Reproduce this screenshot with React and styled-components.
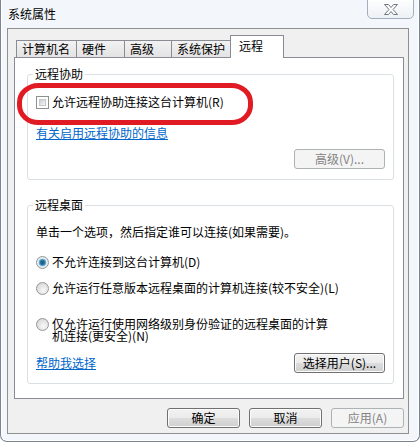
import React from 'react'
import styled, { createGlobalStyle, css } from 'styled-components'

const GlobalStyle = createGlobalStyle`
  html, body {
    margin: 0;
    padding: 0;
    background: #fff;
  }
  body {
    font-family: "Noto Sans CJK SC", "Liberation Sans", sans-serif;
    font-size: 12px;
    color: #000;
  }
`

const Window = styled.div`
  position: relative;
  width: 420px;
  height: 442px;
  box-sizing: border-box;
  background: #f3f7fb;
  border: 1px solid #7b8591;
  border-top: none;
  border-radius: 0 0 7px 7px;
  box-shadow: inset 1px 0 0 #fff, inset -1px 0 0 #fff, inset 0 -1px 0 #fff;
  display: flex;
  flex-direction: column;
`

const TitleBar = styled.div`
  height: 28px;
  flex: none;
  display: flex;
  align-items: flex-start;
  justify-content: space-between;
  padding-left: 7px;
`

const Title = styled.span`
  line-height: 28px;
  font-size: 12px;
`

const CloseButton = styled.div`
  width: 47px;
  height: 20px;
  box-sizing: border-box;
  margin-top: -1px;
  margin-right: 5px;
  border: 1px solid #a3afbc;
  border-radius: 0 0 5px 5px;
  background: linear-gradient(#fdfefe, #edf1f5);
  display: flex;
  align-items: center;
  justify-content: center;
`

const Client = styled.div`
  flex: 1;
  margin: 0 10px 7px 6px;
  border: 1px solid #8e8f8f;
  background: #f0f0f0;
  display: flex;
  flex-direction: column;
  padding: 6px 4px 5px 6px;
  min-height: 0;
`

const TabStrip = styled.div`
  height: 22px;
  flex: none;
  display: flex;
  align-items: flex-end;
  padding-left: 2px;
  position: relative;
  z-index: 1;
`

const Tab = styled.div`
  box-sizing: border-box;
  width: ${p => p.$w}px;
  height: 17px;
  margin-right: -1px;
  padding-left: 5px;
  line-height: 16px;
  border: 1px solid #898c95;
  border-bottom: none;
  background: linear-gradient(#f2f2f2, #e3e3e3);
  white-space: nowrap;
  ${p =>
    p.$active &&
    css`
      height: 23px;
      margin-bottom: -1px;
      margin-right: 0;
      padding-left: 8px;
      line-height: 20px;
      background: #fff;
    `}
`

const Panel = styled.div`
  flex: 1;
  border: 1px solid #898c95;
  background: #fff;
  padding: 8px 9px 14px 12px;
  display: flex;
  flex-direction: column;
  gap: 17px;
`

const Group = styled.fieldset`
  margin: 0;
  min-width: 0;
  padding: 0 8px 10px 8px;
  border: 1px solid #d9dfe3;
  border-radius: 3px;
  display: flex;
  flex-direction: column;
`

const Legend = styled.legend`
  padding: 0 2px;
  margin-left: -3px;
  line-height: 16px;
  font-size: 12px;
`

const Row = styled.div`
  display: flex;
  align-items: ${p => (p.$top ? 'flex-start' : 'center')};
  justify-content: ${p => (p.$spread ? 'space-between' : 'flex-start')};
  margin-top: ${p => p.$mt || 0}px;
  line-height: ${p => p.$lh || 16}px;
  min-height: 16px;
`

const Text = styled.span`
  margin-left: ${p => (p.$indent ? 3 : 0)}px;
  max-width: ${p => (p.$wrap ? '278px' : 'none')};
  white-space: ${p => (p.$wrap ? 'normal' : 'nowrap')};
`

const Link = styled.a`
  color: #0066cc;
  text-decoration: underline;
  cursor: pointer;
  line-height: 16px;
`

const CheckBox = styled.span`
  flex: none;
  width: 13px;
  height: 13px;
  box-sizing: border-box;
  border: 1px solid #8e8f8f;
  background: #fff;
  position: relative;
  &::after {
    content: '';
    position: absolute;
    inset: 2px;
    background: linear-gradient(135deg, #cbcfd5, #f6f6f6);
    border: 1px solid #c4c7cc;
    box-sizing: border-box;
  }
`

const Radio = styled.span`
  flex: none;
  width: 13px;
  height: 13px;
  box-sizing: border-box;
  border-radius: 50%;
  border: 1px solid #939699;
  margin-top: ${p => p.$mt || 0}px;
  background: radial-gradient(circle at 60% 65%, #f8f8f8 0%, #dcdcdc 70%, #c8c8c8 100%);
  ${p =>
    p.$checked &&
    css`
      background: radial-gradient(circle at 50% 50%, #1c4f74 0%, #2f7aa8 30%, #7fc7ea 48%, #e2e8ec 52%, #eef0f2 100%);
    `}
`

const Button = styled.button`
  box-sizing: border-box;
  width: ${p => p.$w || 73}px;
  height: 20px;
  padding: 0;
  font-family: inherit;
  font-size: 12px;
  line-height: 16px;
  color: #000;
  border: 1px solid #707070;
  border-radius: 3px;
  background: linear-gradient(#f2f2f2 0%, #ebebeb 50%, #dddddd 50%, #cfcfcf 100%);
  box-shadow: inset 0 0 0 1px #fcfcfc;
  &:disabled {
    color: #838383;
    border-color: #adb2b5;
    background: #f4f4f4;
    box-shadow: none;
  }
`

const Footer = styled.div`
  flex: none;
  margin-top: 9px;
  display: flex;
  justify-content: flex-end;
  gap: 9px;
`

const Annotation = styled.svg`
  position: absolute;
  left: 16px;
  top: 83px;
  overflow: visible;
  pointer-events: none;
`

const CloseGlyph = () => (
  <svg width="14" height="11" viewBox="0 0 14 11">
    <polygon
      points="0.5,0.5 4.5,0.5 7,3.5 9.5,0.5 13.5,0.5 9,5.5 13.5,10.5 9.5,10.5 7,7.5 4.5,10.5 0.5,10.5 5,5.5"
      fill="#fff"
      stroke="#6f7782"
      strokeWidth="1"
      strokeLinejoin="round"
    />
  </svg>
)

const tabs = [
  { label: '计算机名', w: 61 },
  { label: '硬件', w: 49 },
  { label: '高级', w: 48 },
  { label: '系统保护', w: 60 },
  { label: '远程', w: 54, active: true },
]

export default function App() {
  return (
    <>
      <GlobalStyle />
      <Window>
        <TitleBar>
          <Title>系统属性</Title>
          <CloseButton>
            <CloseGlyph />
          </CloseButton>
        </TitleBar>
        <Client>
          <TabStrip>
            {tabs.map(t => (
              <Tab key={t.label} $w={t.w} $active={t.active}>
                {t.label}
              </Tab>
            ))}
          </TabStrip>
          <Panel>
            <Group>
              <Legend>远程协助</Legend>
              <Row $mt={12}>
                <CheckBox />
                <Text $indent>允许远程协助连接这台计算机(R)</Text>
              </Row>
              <Row $mt={15}>
                <Link>有关启用远程协助的信息</Link>
              </Row>
              <Row $mt={8} $spread>
                <span />
                <Button $w={91} disabled>
                  高级(V)...
                </Button>
              </Row>
            </Group>
            <Group>
              <Legend>远程桌面</Legend>
              <Row $mt={11}>
                <Text>单击一个选项，然后指定谁可以连接(如果需要)。</Text>
              </Row>
              <Row $mt={14}>
                <Radio $checked />
                <Text $indent>不允许连接到这台计算机(D)</Text>
              </Row>
              <Row $mt={10}>
                <Radio />
                <Text $indent>允许运行任意版本远程桌面的计算机连接(较不安全)(L)</Text>
              </Row>
              <Row $mt={22} $top $lh={12}>
                <Radio />
                <Text $indent $wrap>
                  仅允许运行使用网络级别身份验证的远程桌面的计算机连接(更安全)(N)
                </Text>
              </Row>
              <Row $mt={11} $spread>
                <Link>帮助我选择</Link>
                <Button $w={91}>选择用户(S)...</Button>
              </Row>
            </Group>
          </Panel>
          <Footer>
            <Button>确定</Button>
            <Button>取消</Button>
            <Button disabled>应用(A)</Button>
          </Footer>
        </Client>
        <Annotation width="236" height="42" viewBox="0 0 236 42">
          <rect
            x="2.5"
            y="2.5"
            width="231"
            height="37"
            rx="19"
            ry="17"
            fill="none"
            stroke="#e01b24"
            strokeWidth="5"
          />
        </Annotation>
      </Window>
    </>
  )
}
